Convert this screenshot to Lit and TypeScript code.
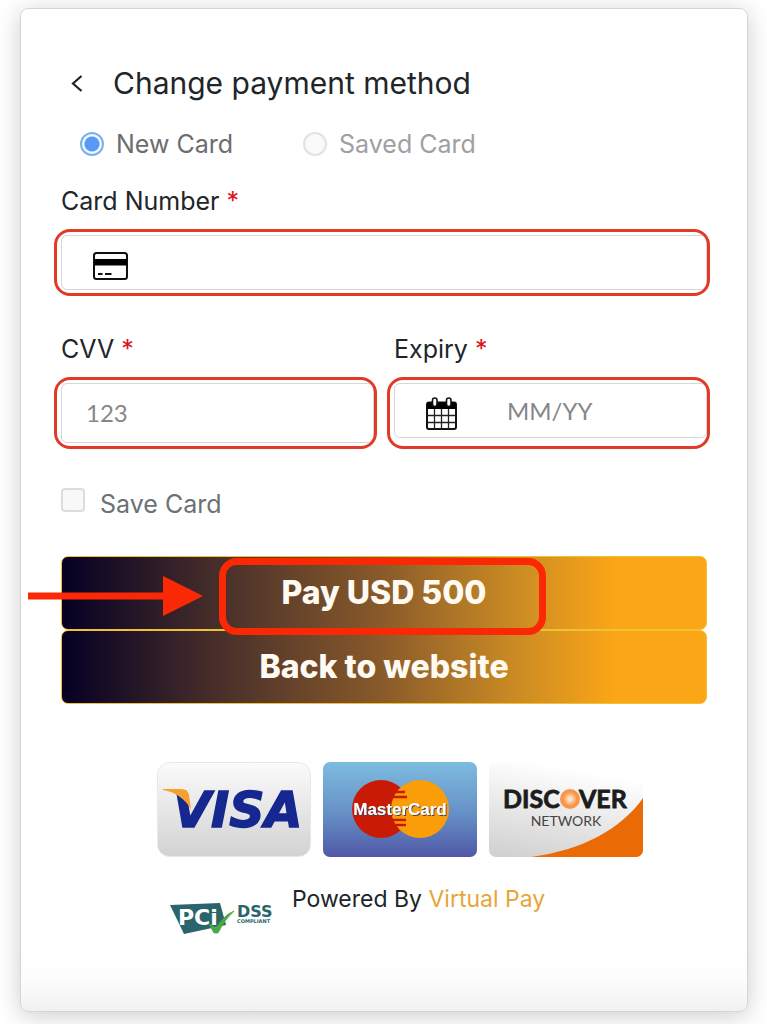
import { LitElement, html, css } from "lit";
import { customElement, state } from "lit/decorators.js";

const cardIcon = html`<svg class="icon" width="35" height="28" viewBox="0 0 35 28" aria-hidden="true">
  <rect x="1" y="1" width="33" height="26" rx="2.5" fill="#fff" stroke="#111" stroke-width="2" />
  <rect x="1" y="7" width="33" height="6.5" fill="#000" />
  <path d="M5 22h4.500M12 22h6.500" stroke="#111" stroke-width="2" />
</svg>`;

const calendarIcon = html`<svg class="icon" width="31" height="33" viewBox="0 0 31 33" aria-hidden="true">
  <rect x="1" y="5.500" width="29" height="26.500" rx="2" fill="#fff" stroke="#111" stroke-width="2" />
  <rect x="1" y="5.500" width="29" height="6.500" fill="#000" />
  <path d="M1.500 18.500h28M1.500 25.500h28M8.500 12v20M15.500 12v20M22.500 12v20" stroke="#222" stroke-width="1.300" />
  <rect x="6.500" y="1" width="4.500" height="8.500" rx="2.200" fill="#fff" stroke="#111" stroke-width="1.600" />
  <rect x="20.500" y="1" width="4.500" height="8.500" rx="2.200" fill="#fff" stroke="#111" stroke-width="1.600" />
</svg>`;

const visaLogo = html`<svg class="brand" viewBox="0 0 154 95" role="img" aria-label="Visa">
  <defs>
    <linearGradient id="visa-bg" x1="0" y1="0" x2="0" y2="1">
      <stop offset="0" stop-color="#fbfbfb" /><stop offset="1" stop-color="#d2d2d2" />
    </linearGradient>
  </defs>
  <rect x="0.500" y="0.500" width="153" height="94" rx="12" fill="url(#visa-bg)" stroke="#e8e8e8" />
  <text x="16" y="65" font-family="DejaVu Sans, sans-serif" font-size="49" font-weight="700" font-style="italic" fill="#16278f" stroke="#16278f" stroke-width="1.500">VISA</text>
  <path d="M6 27h18q7 0 8 6l2 14Q24 31 6 28z" fill="#f6a02d" />
</svg>`;

const masterLogo = html`<svg class="brand" viewBox="0 0 154 95" role="img" aria-label="MasterCard">
  <defs>
    <linearGradient id="mc-bg" x1="0" y1="0" x2="0" y2="1">
      <stop offset="0" stop-color="#7dbce0" /><stop offset="0.550" stop-color="#668fc6" /><stop offset="1" stop-color="#5058a6" />
    </linearGradient>
    <filter id="mc-shadow"><feDropShadow dx="1" dy="1" stdDeviation="0.5" flood-color="#453f55" /></filter>
  </defs>
  <rect width="154" height="95" rx="7" fill="url(#mc-bg)" />
  <circle cx="58" cy="47" r="29" fill="#c91a05" />
  <circle cx="97" cy="47" r="29" fill="#fb9d08" />
  <path d="M72 30h10M70 35h14M69 58h14M71 63h12" stroke="#c91a05" stroke-width="2.500" />
  <text x="77" y="53" text-anchor="middle" font-family="Liberation Sans, sans-serif" font-size="17" font-weight="700" fill="#fff" filter="url(#mc-shadow)">MasterCard</text>
</svg>`;

const discoverLogo = html`<svg class="brand" viewBox="0 0 154 95" role="img" aria-label="Discover Network">
  <defs>
    <linearGradient id="ds-bg" x1="0.300" y1="0" x2="0" y2="1">
      <stop offset="0" stop-color="#ffffff" /><stop offset="1" stop-color="#cfcfcf" />
    </linearGradient>
    <radialGradient id="ds-o">
      <stop offset="0.150" stop-color="#ffe3c4" /><stop offset="0.700" stop-color="#f7964a" />
    </radialGradient>
    <clipPath id="ds-clip"><rect width="154" height="95" rx="7" /></clipPath>
  </defs>
  <g clip-path="url(#ds-clip)">
    <rect width="154" height="95" fill="url(#ds-bg)" />
    <path d="M154 36C132 67 94 88 42 95H154z" fill="#ea6a05" />
  </g>
  <g font-family="Lato, sans-serif" fill="#1c1c1c">
    <text x="14" y="46" font-size="25" font-weight="700" stroke="#1c1c1c" stroke-width="0.800">DISC</text>
    <text x="90" y="46" font-size="25" font-weight="700" stroke="#1c1c1c" stroke-width="0.800">VER</text>
    <text x="77" y="64" text-anchor="middle" font-size="14" fill="#444">NETWORK</text>
  </g>
  <circle cx="81" cy="37" r="10" fill="url(#ds-o)" />
</svg>`;

const pciLogo = html`<svg class="pci" width="104" height="32" viewBox="0 0 104 32" role="img" aria-label="PCI DSS Compliant">
  <path d="M0 2L50 0 56 22 14 31z" fill="#2b656b" />
  <text x="8" y="22" font-family="DejaVu Sans, sans-serif" font-size="22" font-weight="700" fill="#fff">PCi</text>
  <path d="M39 21l7 4Q54 12 64 8 54 17 48 30h-4z" fill="#48a843" stroke="#48a843" stroke-width="0.800" />
  <g font-family="DejaVu Sans, sans-serif" font-weight="700" fill="#2b656b">
    <text x="67" y="14" font-size="16">DSS</text>
    <text x="67" y="20" font-size="5">COMPLIANT</text>
  </g>
</svg>`;

@customElement("app-root")
export class AppRoot extends LitElement {
  @state() private mode = "new";

  static styles = css`
    :host {
      display: block;
      overflow: hidden;
      background: #fff;
      color: #212529;
      font-family: Inter, sans-serif;
      font-size: 25px;
      line-height: 32px;
    }
    * { box-sizing: border-box; }
    .card {
      margin: 8px 19px 13px 20px;
      padding: 54px 40px 76px;
      border: 1px solid #d5d5d5;
      border-radius: 8px;
      background: linear-gradient(to top, #f1f1f1, #fdfdfd 32px, #fff 64px);
      box-shadow: 0 4px 24px rgba(0, 0, 0, 0.2);
    }
    header { display: flex; align-items: center; gap: 20px; }
    .back {
      display: flex;
      width: 32px;
      height: 40px;
      align-items: center;
      justify-content: center;
      padding: 0;
      border: 0;
      background: none;
    }
    h1 { margin: 0; font-size: 30px; font-weight: 400; line-height: 40px; }
    .modes { display: flex; gap: 70px; margin: 25px 0; padding-left: 19px; color: #6c6d70; }
    .choice { display: flex; align-items: center; gap: 12px; }
    .choice.off { color: #a0a0a2; }
    input { margin: 0; font: inherit; color: inherit; }
    .radio {
      appearance: none;
      width: 24px;
      height: 24px;
      border: 2px solid #e2e2e2;
      border-radius: 50%;
      background: #fafafa;
    }
    .radio:checked {
      border-color: #7fb0e8;
      background: radial-gradient(circle, #5b97f5 0 7px, #e9fbff 8px);
    }
    .label { display: block; width: fit-content; margin-bottom: 18px; }
    .req { color: #d8141c; }
    .field {
      position: relative;
      display: flex;
      align-items: flex-start;
    }
    .field.tall { height: 60px; }
    .field::after {
      content: "";
      position: absolute;
      inset: -6px -3px -6px -7px;
      border: 3px solid #e23a28;
      border-radius: 16px;
      pointer-events: none;
    }
    .control {
      display: flex;
      flex: 1;
      min-width: 0;
      height: 55px;
      align-items: center;
      gap: 50px;
      padding: 0 24px;
      border: 1px solid #d3d6da;
      border-radius: 6px;
      background: #fff;
    }
    .control.full { height: 60px; }
    .control.with-icon { padding-left: 31px; }
    .icon { flex: none; margin-top: 6px; }
    .control input {
      flex: 1;
      min-width: 0;
      width: 100%;
      padding: 0;
      border: 0;
      outline: 0;
      background: none;
      font-family: Lato, sans-serif;
      font-size: 24px;
    }
    .control input::placeholder { color: #85878a; opacity: 1; }
    .pair { display: grid; grid-template-columns: 1fr 1fr; gap: 20px; margin: 43px 0 45px; }
    .save { display: flex; width: fit-content; align-items: flex-start; gap: 15px; color: #6c7174; }
    .check {
      appearance: none;
      width: 24px;
      height: 24px;
      border: 2px solid #dcdcdc;
      border-radius: 4px;
      background: #f8f8f8;
    }
    .check:checked { background: #5b97f5; }
    .actions { position: relative; display: grid; margin: 36px 0 58px; }
    .action {
      height: 74px;
      padding: 0;
      border: 1px solid #f2c033;
      border-radius: 7px;
      background: linear-gradient(to right, #050024, #4a302a 25%, #87592a 49%, #c98a24 70%, #fba617 86%);
      color: #fffaf2;
      font: 800 32px/40px Inter, sans-serif;
    }
    .mark {
      position: absolute;
      top: 2px;
      left: 50%;
      width: 327px;
      height: 77px;
      margin-left: -165px;
      border: 7px solid #fb2806;
      border-radius: 18px;
      pointer-events: none;
    }
    .arrow { position: absolute; top: 20px; left: -33px; pointer-events: none; }
    .brands { display: flex; justify-content: center; gap: 12px; padding-left: 32px; }
    .brand { display: block; flex: 0 1 154px; min-width: 0; height: 95px; }
    footer { display: flex; align-items: flex-start; gap: 18px; margin-top: 26px; padding-left: 109px; }
    .pci { flex: none; margin-top: 20px; }
    p { margin: 0; font-size: 23px; }
    a { color: #e7a53a; text-decoration: none; }
  `;

  private modeChoice(value: string, label: string) {
    const active = this.mode === value;
    return html`<label class="choice ${active ? "" : "off"}">
      <input class="radio" type="radio" name="mode" .checked=${active} @change=${() => (this.mode = value)} />
      ${label}
    </label>`;
  }

  render() {
    return html`
      <main class="card">
        <header>
          <button class="back" type="button" aria-label="Back">
            <svg width="12" height="20" viewBox="0 0 12 20"><path d="M10.500 3L2 10.500l8.500 7.500" fill="none" stroke="#222" stroke-width="2.200" /></svg>
          </button>
          <h1>Change payment method</h1>
        </header>
        <form @submit=${(e: Event) => e.preventDefault()}>
          <div class="modes">
            ${this.modeChoice("new", "New Card")} ${this.modeChoice("saved", "Saved Card")}
          </div>
          <label class="label" for="number">Card Number <span class="req">*</span></label>
          <div class="field">
            <div class="control with-icon">${cardIcon}<input id="number" inputmode="numeric" /></div>
          </div>
          <div class="pair">
            <div>
              <label class="label" for="cvv">CVV <span class="req">*</span></label>
              <div class="field tall"><div class="control full"><input id="cvv" placeholder="123" /></div></div>
            </div>
            <div>
              <label class="label" for="expiry">Expiry <span class="req">*</span></label>
              <div class="field tall">
                <div class="control with-icon">${calendarIcon}<input id="expiry" placeholder="MM/YY" /></div>
              </div>
            </div>
          </div>
          <label class="save"><input class="check" type="checkbox" />Save Card</label>
          <div class="actions">
            <button class="action" type="submit">Pay USD 500</button>
            <button class="action" type="button">Back to website</button>
            <span class="mark"></span>
            <svg class="arrow" width="175" height="40" viewBox="0 0 175 40" aria-hidden="true">
              <path d="M0 16.500H135V0L175 20 135 40V23.500H0z" fill="#fb2806" />
            </svg>
          </div>
        </form>
        <div class="brands">${visaLogo}${masterLogo}${discoverLogo}</div>
        <footer>
          ${pciLogo}
          <p>Powered By <a href="#">Virtual Pay</a></p>
        </footer>
      </main>
    `;
  }
}
